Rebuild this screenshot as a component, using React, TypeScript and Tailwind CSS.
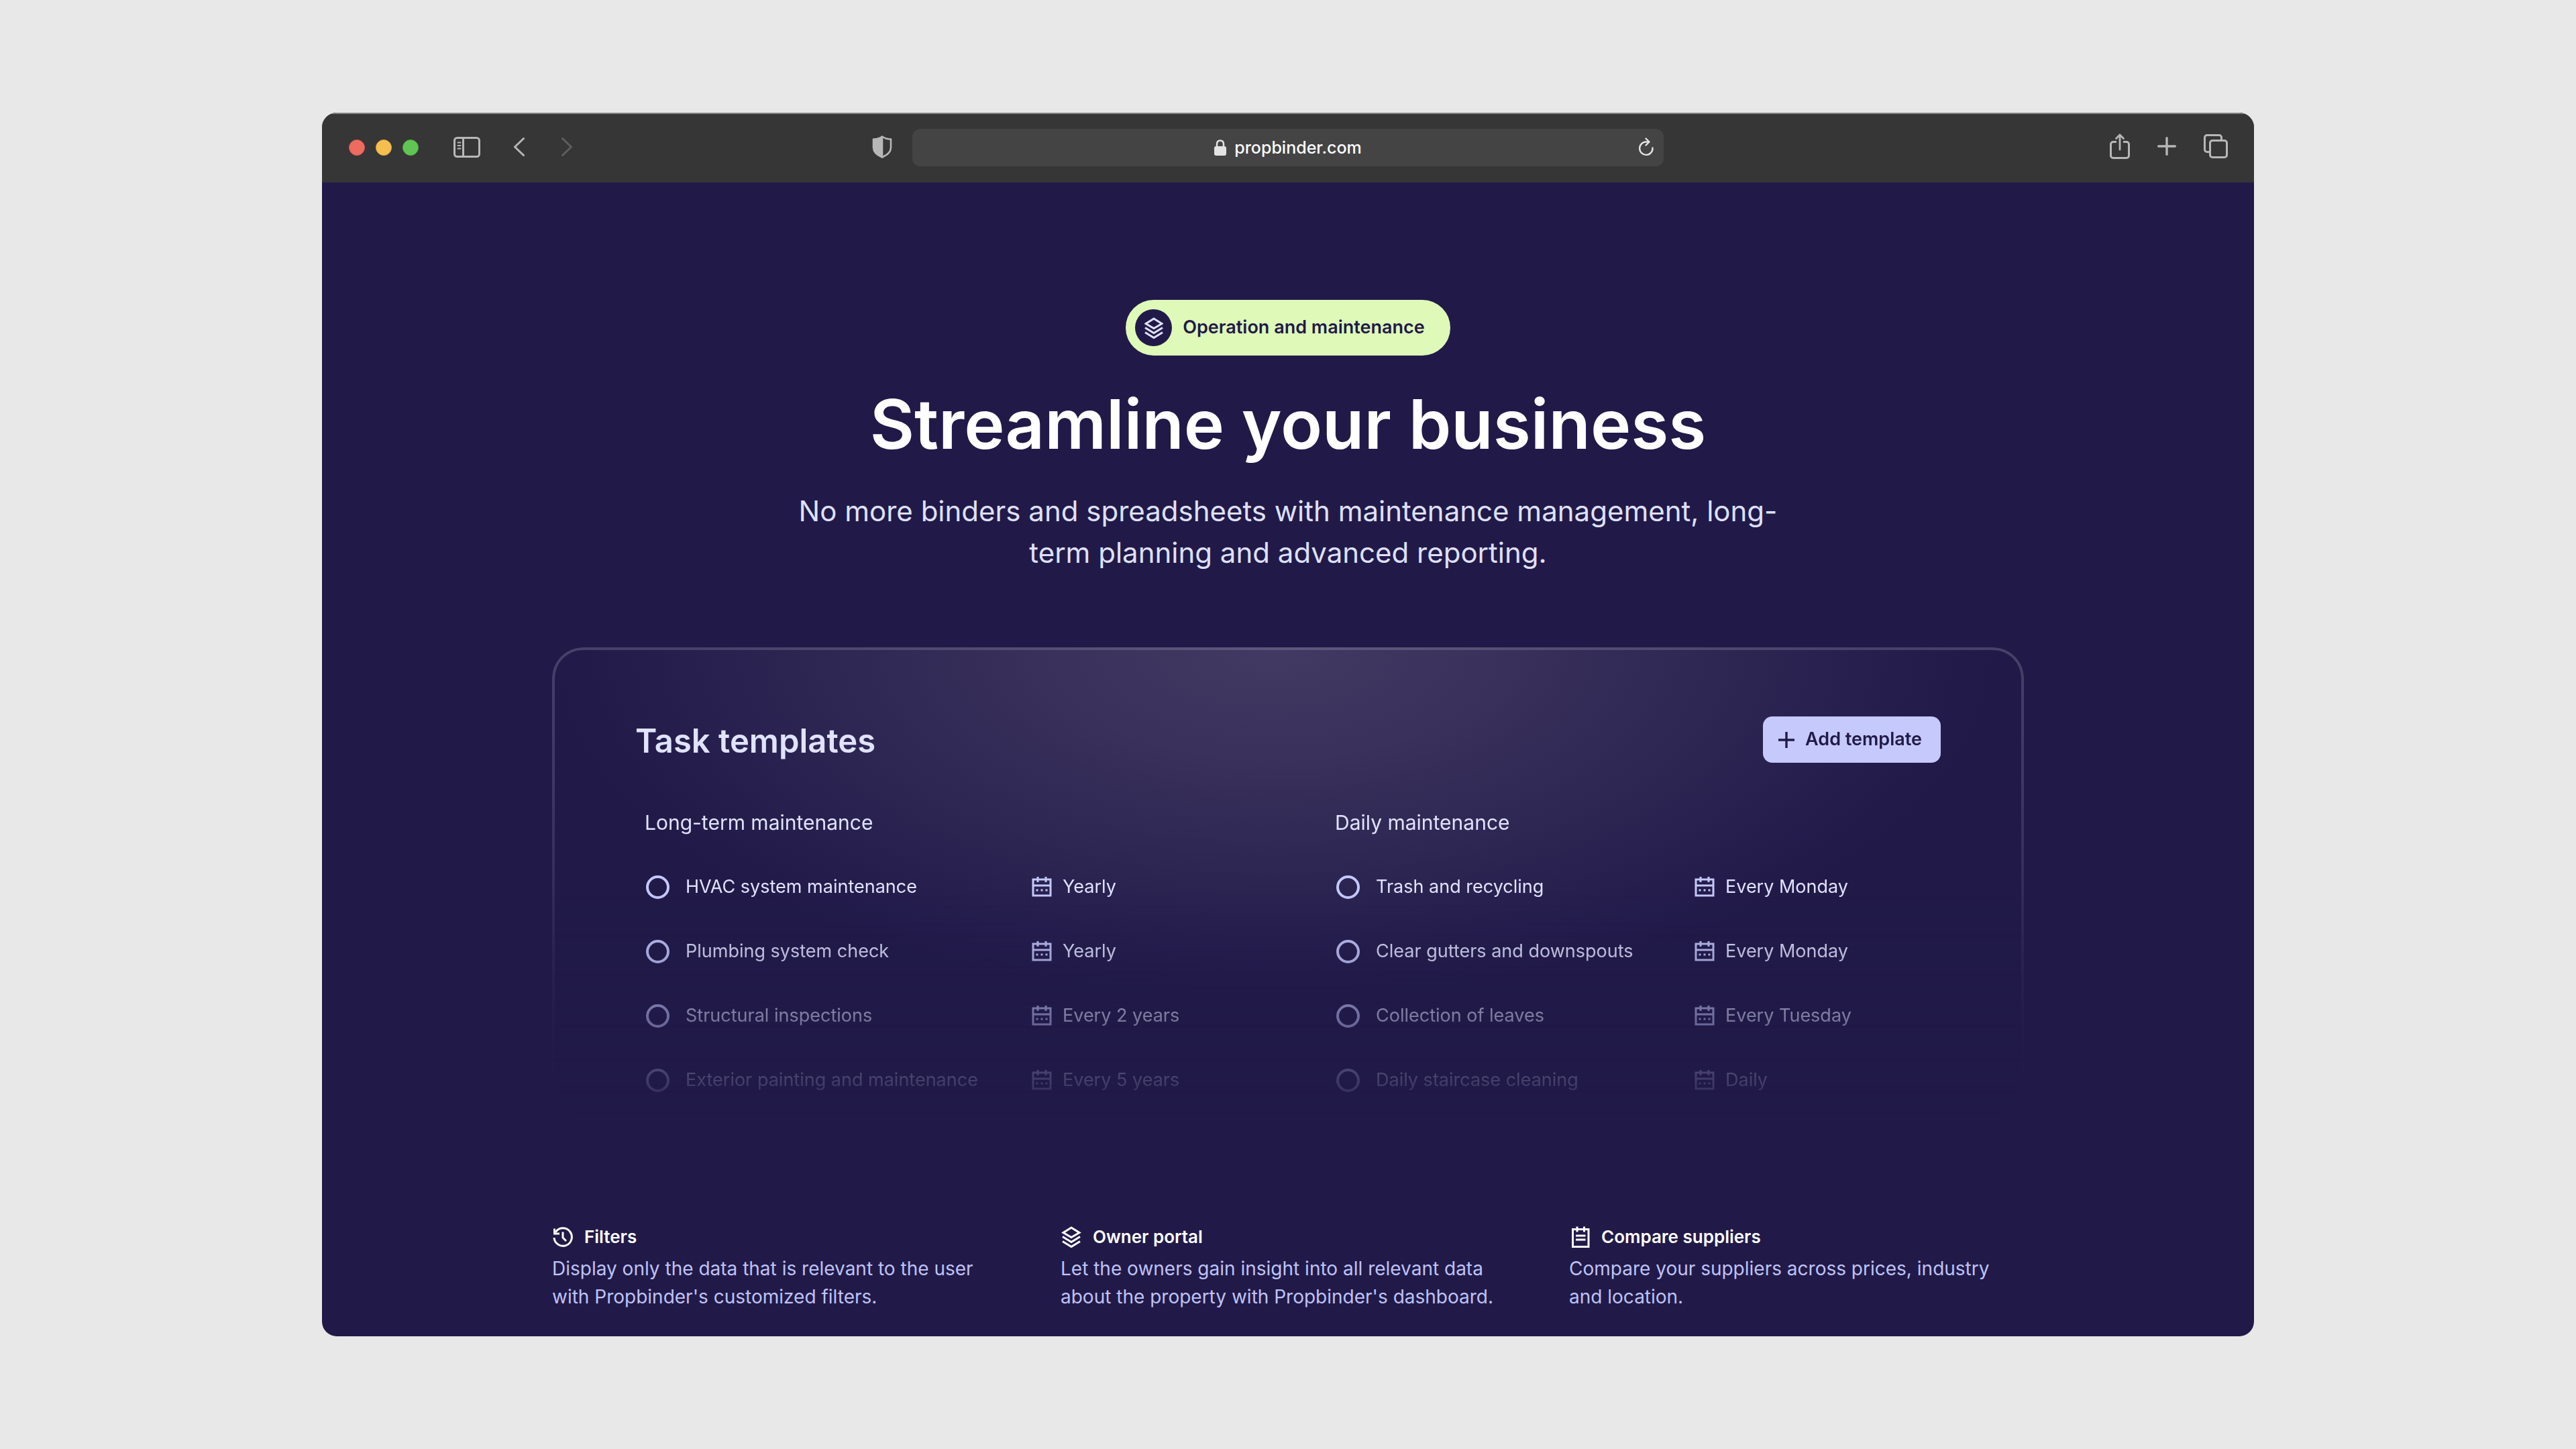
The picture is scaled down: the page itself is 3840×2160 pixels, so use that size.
import type { ReactNode } from "react";

type Task = { name: string; schedule: string };
type TaskGroup = { title: string; columns: string; tasks: Task[] };
type Feature = { title: string; text: string; icon: ReactNode };

function LayersIcon({ className, strokeWidth = 3 }: { className?: string; strokeWidth?: number }) {
  return (
    <svg className={className} viewBox="0 0 28 32" fill="none" stroke="currentColor" strokeWidth={strokeWidth} aria-hidden="true">
      <path d="M14 2 26 9.5 14 16.5 2 9.5Z" />
      <path d="M1 15.5 14 23.5 27 15.5" />
      <path d="M1 22.5 14 30.5 27 22.5" />
    </svg>
  );
}

function HistoryIcon() {
  return (
    <svg className="size-8" viewBox="0 0 32 32" fill="none" stroke="currentColor" strokeWidth="3" aria-hidden="true">
      <path d="M3 17A13.2 13.2 0 1 0 5 9" />
      <path d="M3.5 3.5V11H11" />
      <path d="M16 8.5V17L21 22" />
    </svg>
  );
}

function NotepadIcon() {
  return (
    <svg className="size-8" viewBox="0 0 32 32" fill="none" stroke="currentColor" strokeWidth="3" aria-hidden="true">
      <path d="M5.5 4.5H29V30.5H5.5Z" />
      <path d="M12 .5V8.5M22.5 .5V8.5M10 14H24.500M10 20H24.500" />
    </svg>
  );
}

function CalendarIcon() {
  return (
    <svg className="h-[31px] w-[30px] text-[#c5c8fc]" viewBox="0 0 30 31" fill="none" stroke="currentColor" strokeWidth="3" aria-hidden="true">
      <path d="M2 4H28V28H2ZM2 13H28M9 0V8M21 0V8" />
      <path d="M6.5 20h3M13.5 20h3M20.5 20h3" />
    </svg>
  );
}

const groups: TaskGroup[] = [
  {
    title: "Long-term maintenance",
    columns: "grid-cols-[577px_1fr]",
    tasks: [
      { name: "HVAC system maintenance", schedule: "Yearly" },
      { name: "Plumbing system check", schedule: "Yearly" },
      { name: "Structural inspections", schedule: "Every 2 years" },
      { name: "Exterior painting and maintenance", schedule: "Every 5 years" },
    ],
  },
  {
    title: "Daily maintenance",
    columns: "grid-cols-[536px_1fr]",
    tasks: [
      { name: "Trash and recycling", schedule: "Every Monday" },
      { name: "Clear gutters and downspouts", schedule: "Every Monday" },
      { name: "Collection of leaves", schedule: "Every Tuesday" },
      { name: "Daily staircase cleaning", schedule: "Daily" },
    ],
  },
];

const features: Feature[] = [
  {
    title: "Filters",
    text: "Display only the data that is relevant to the user with Propbinder's customized filters.",
    icon: <HistoryIcon />,
  },
  {
    title: "Owner portal",
    text: "Let the owners gain insight into all relevant data about the property with Propbinder's dashboard.",
    icon: <LayersIcon className="size-8" />,
  },
  {
    title: "Compare suppliers",
    text: "Compare your suppliers across prices, industry and location.",
    icon: <NotepadIcon />,
  },
];

function Toolbar() {
  return (
    <header className="grid h-[104px] grid-cols-[1fr_1120px_1fr] items-center bg-[#363636] text-[#b7b7b7] shadow-[inset_0_2px_0_#808080]">
      <div className="flex items-center pl-10 pr-[30px]">
        <div className="flex gap-4">
          <button aria-label="Close" className="size-6 rounded-full border border-[#d9594e] bg-[#ed6b5f]" />
          <button aria-label="Minimize" className="size-6 rounded-full border border-[#dba540] bg-[#f5bf4f]" />
          <button aria-label="Maximize" className="size-6 rounded-full border border-[#51ad45] bg-[#61c554]" />
        </div>
        <div className="flex flex-1 items-center pb-0.5">
          <button aria-label="Toggle sidebar" className="ml-[52px]">
            <svg className="h-[31px] w-10" viewBox="0 0 40 31" fill="none" stroke="currentColor" strokeWidth="3">
              <rect x="1.5" y="1.5" width="37" height="28" rx="4" />
              <path d="M14.5 2V29" />
              <path d="M6.5 8.5h4M6.5 13h4M6.5 17.5h4" strokeWidth="2" strokeLinecap="round" />
            </svg>
          </button>
          <button aria-label="Back" className="ml-[50px]">
            <svg className="h-7 w-4" viewBox="0 0 16 28" fill="none" stroke="currentColor" strokeWidth="3" strokeLinecap="round" strokeLinejoin="round">
              <path d="M14.5 1.5 1.5 14 14.5 26.5" />
            </svg>
          </button>
          <button aria-label="Forward" className="ml-[55px] text-[#5e5e5e]">
            <svg className="h-7 w-4" viewBox="0 0 16 28" fill="none" stroke="currentColor" strokeWidth="3" strokeLinecap="round" strokeLinejoin="round">
              <path d="M1.5 1.5 14.5 14 1.5 26.5" />
            </svg>
          </button>
          <button aria-label="Privacy report" className="ml-auto">
            <svg className="h-[34px] w-[30px]" viewBox="0 0 30 34" fill="none" stroke="currentColor" strokeWidth="2.6" strokeLinejoin="round">
              <path d="M15 1.500C19 4.500 23 5.500 28 5.500V18C28 25 23 29 15 32.500C7 29 2 25 2 18V5.500C7 5.500 11 4.500 15 1.500Z" />
              <path d="M15 1.500C11 4.500 7 5.500 2 5.500V18C2 25 7 29 15 32.500Z" fill="currentColor" stroke="none" />
              <path d="M15 2V32" />
            </svg>
          </button>
        </div>
      </div>

      <div className="grid h-14 grid-cols-[1fr_auto_1fr] items-center rounded-xl bg-[#444444] text-[#e3e3e3]">
        <div />
        <div className="flex items-center gap-3">
          <svg className="h-6 w-[18px]" viewBox="0 0 18 24" aria-hidden="true">
            <rect y="10" width="18" height="14" rx="3" fill="currentColor" />
            <path d="M4 11V7C4 3.500 6 1.500 9 1.500S14 3.500 14 7V11" fill="none" stroke="currentColor" strokeWidth="2.5" />
          </svg>
          <input
            aria-label="Address"
            defaultValue="propbinder.com"
            className="field-sizing-content bg-transparent text-[25px] leading-8 font-medium text-white outline-none"
          />
        </div>
        <button aria-label="Reload" className="mr-3.5 justify-self-end pb-0.5">
          <svg className="h-7 w-6" viewBox="0 0 24 28" fill="none" stroke="currentColor" strokeWidth="2.4" strokeLinecap="round" strokeLinejoin="round">
            <path d="M21.5 15.5A9.7 9.7 0 1 1 12 6.500H15.500" />
            <path d="M11.5 1.5 16.500 6.500 11.500 11.500" />
          </svg>
        </button>
      </div>

      <div className="flex items-center justify-end gap-[41px] pr-[39px] pb-1">
        <button aria-label="Share">
          <svg className="h-[38px] w-[30px]" viewBox="0 0 30 38" fill="none" stroke="currentColor" strokeWidth="3" strokeLinecap="round" strokeLinejoin="round">
            <path d="M10 12.500H5A3.500 3.500 0 0 0 1.500 16V33A3.500 3.500 0 0 0 5 36.500H25A3.500 3.500 0 0 0 28.500 33V16A3.500 3.500 0 0 0 25 12.500H20" strokeLinecap="butt" />
            <path d="M15 24V2M9.500 7.500 15 2 20.500 7.500" strokeWidth="2.8" />
          </svg>
        </button>
        <button aria-label="New tab">
          <svg className="size-7" viewBox="0 0 28 28" fill="none" stroke="currentColor" strokeWidth="3.4" strokeLinecap="round">
            <path d="M14 1.700V26.300M1.700 14H26.300" />
          </svg>
        </button>
        <button aria-label="Show all tabs">
          <svg className="size-9" viewBox="0 0 36 36" fill="none" stroke="currentColor" strokeWidth="3">
            <path d="M9.500 26.500H5A3.500 3.500 0 0 1 1.500 23V5A3.500 3.500 0 0 1 5 1.500H23A3.500 3.500 0 0 1 26.500 5V9.500" />
            <rect x="9.5" y="9.5" width="25" height="25" rx="3.5" />
          </svg>
        </button>
      </div>
    </header>
  );
}

function TaskList({ group }: { group: TaskGroup }) {
  return (
    <section>
      <h3 className="text-[30px] leading-10">{group.title}</h3>
      <ul className="mt-7 text-[27px]">
        {group.tasks.map((task) => (
          <li key={task.name} className={`grid h-24 items-center ${group.columns}`}>
            <label className="flex items-center gap-6 whitespace-nowrap">
              <input
                type="checkbox"
                className="ml-0.5 size-[35px] appearance-none rounded-full border-4 border-[#c5c8fc] checked:bg-[#c5c8fc]"
              />
              {task.name}
            </label>
            <span className="flex items-center gap-4 whitespace-nowrap">
              <CalendarIcon />
              {task.schedule}
            </span>
          </li>
        ))}
      </ul>
    </section>
  );
}

function TemplatesCard() {
  return (
    <section className="mt-[110px] w-full rounded-[46px] border-4 border-transparent [background:radial-gradient(1080px_520px_at_49%_0%,#433a63_0%,#3a315c_30%,#302955_55%,#28214f_78%,#231c4b_92%,#211a48_100%)_padding-box,radial-gradient(900px_300px_at_50%_0%,#5f587c_0%,transparent_100%)_border-box,linear-gradient(#484069_0%,#3f3762_30%,#2e2654_65%,#211a48_100%)_border-box] px-[120px] pt-[99px] text-[#e0e2ff] mask-[linear-gradient(to_bottom,#000_52%,rgba(0,0,0,0.8)_66%,rgba(0,0,0,0.48)_79%,rgba(0,0,0,0.18)_93%,transparent_100%)]">
      <div className="flex items-center justify-between">
        <h2 className="pt-1 text-[49px] leading-[60px] font-semibold">Task templates</h2>
        <button className="flex h-[69px] items-center gap-4 rounded-[14px] bg-[#c6c9fb] pr-7 pl-[23px] text-[27px] font-semibold text-[#211a48]">
          <svg className="size-6" viewBox="0 0 24 24" fill="none" stroke="currentColor" strokeWidth="3.4" aria-hidden="true">
            <path d="M12 0V24M0 12H24" />
          </svg>
          Add template
        </button>
      </div>
      <div className="mt-[69px] grid grid-cols-2 gap-[126px] pl-3.5">
        {groups.map((group) => (
          <TaskList key={group.title} group={group} />
        ))}
      </div>
    </section>
  );
}

export default function App() {
  return (
    <div className="min-h-screen bg-[#e8e8e8] px-[12.5%] py-[168px] font-['Inter','Liberation_Sans',sans-serif]">
      <div className="overflow-hidden rounded-[22px] bg-[#211a48]">
        <Toolbar />
        <main className="mx-auto flex w-full max-w-[2194px] flex-col items-center pt-[175px] pb-[38px]">
          <p className="flex h-[83px] items-center gap-4 rounded-full bg-[#dff9b8] pr-[38px] pl-3.5 text-[27px] font-semibold text-[#211a48]">
            <span className="flex size-[55px] items-center justify-center rounded-full bg-[#211a48] text-[#dfe0ff]">
              <LayersIcon className="h-8 w-7" strokeWidth={3} />
            </span>
            Operation and maintenance
          </p>
          <h1 className="mt-[47px] text-[102px] leading-[110px] font-semibold text-white">Streamline your business</h1>
          <p className="mt-11 max-w-[1500px] text-center text-[42px] leading-[62px] text-[#dfe0ff]">
            No more binders and spreadsheets with maintenance management, long-term planning and advanced reporting.
          </p>

          <TemplatesCard />

          <div className="mt-[164px] grid w-full grid-cols-3 gap-20">
            {features.map((feature) => (
              <article key={feature.title}>
                <h3 className="flex items-center gap-4 text-[26px] leading-9 font-semibold text-white">
                  {feature.icon}
                  {feature.title}
                </h3>
                <p className="mt-2 max-w-[664px] text-[28px] leading-[42px] text-[#bfc2f5]">{feature.text}</p>
              </article>
            ))}
          </div>
        </main>
      </div>
    </div>
  );
}
